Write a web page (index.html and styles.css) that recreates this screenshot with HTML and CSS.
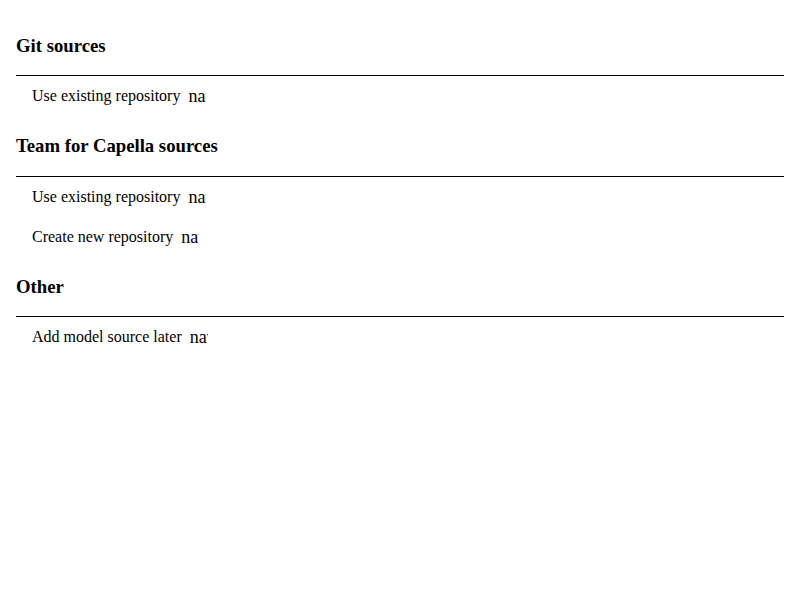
FILE: index.html
```html
<!DOCTYPE html>
<html>
<head>
<meta charset="utf-8">
<link rel="stylesheet" href="styles.css">
</head>
<body>
<div class="page">
  <section class="group">
    <h3 class="group-title">Git sources</h3>
    <div class="divider"></div>
    <div class="item"><span class="label">Use existing repository</span><span class="icon">navigate_next</span></div>
  </section>
  <section class="group">
    <h3 class="group-title">Team for Capella sources</h3>
    <div class="divider"></div>
    <div class="item"><span class="label">Use existing repository</span><span class="icon">navigate_next</span></div>
    <div class="item"><span class="label">Create new repository</span><span class="icon">navigate_next</span></div>
  </section>
  <section class="group">
    <h3 class="group-title">Other</h3>
    <div class="divider"></div>
    <div class="item"><span class="label">Add model source later</span><span class="icon">navigate_next</span></div>
  </section>
</div>
</body>
</html>
```
FILE: styles.css
```css
html, body {
  margin: 0;
  padding: 0;
  background: #fff;
}
body {
  font-family: "Liberation Serif", "Times New Roman", serif;
  color: #000;
}
.page {
  padding: 16px;
}
.group-title {
  font-size: 18.72px;
  font-weight: bold;
  margin: 18.72px 0;
}
.divider {
  border-top: 1px solid #000;
}
.item {
  display: flex;
  align-items: center;
  height: 40px;
  padding-left: 16px;
  font-size: 16px;
}
.icon {
  display: inline-block;
  width: 18px;
  height: 24px;
  line-height: 24px;
  overflow: hidden;
  white-space: nowrap;
  font-size: 18px;
  margin-left: 8px;
}
```
